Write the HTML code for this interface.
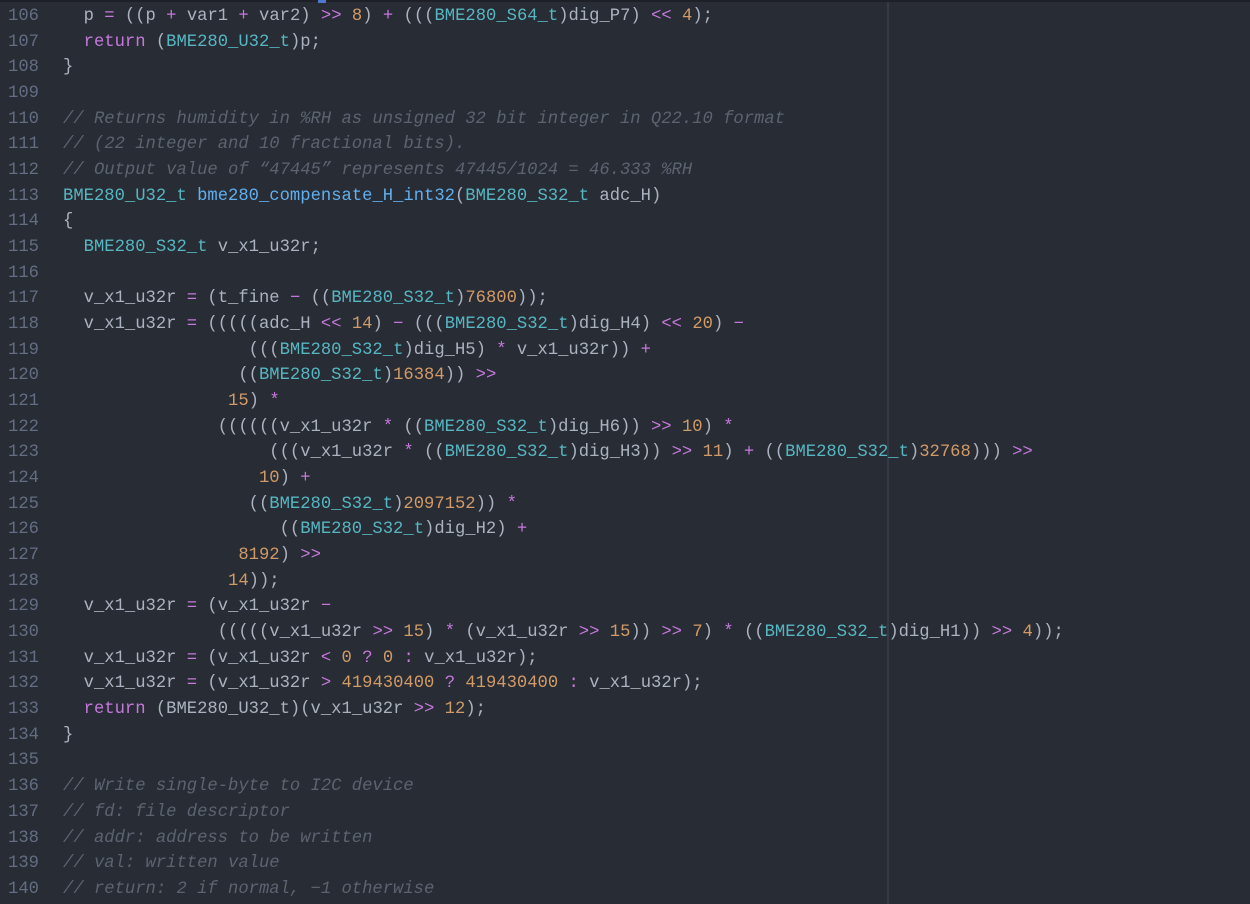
<!DOCTYPE html>
<html><head><meta charset="utf-8"><style>
html,body{margin:0;padding:0;background:#282c34;width:1250px;height:904px;overflow:hidden}
.top{position:absolute;left:0;top:0;width:1250px;height:2px;background:#1d2026}
.top i{position:absolute;left:318px;top:0;width:8px;height:3px;background:#4d78cc}
.guide{position:absolute;left:887px;top:2px;width:2px;height:902px;background:#353a44}
.code{position:absolute;left:0;top:4px;font-family:"Liberation Mono",monospace;font-size:17.2px;line-height:25.68px;color:#abb2bf}
.l{height:25.68px;position:relative;white-space:nowrap}
.n{position:absolute;left:0;width:39px;text-align:right;color:#636d83}
.t{position:absolute;left:63px;white-space:pre}
.k{color:#c678dd}.o{color:#c678dd}.m{color:#d19a66}.y{color:#56b6c2}.f{color:#61afef}.c{color:#5c6370;font-style:italic}
</style></head><body>
<div class="top"><i></i></div>
<div class="guide"></div>
<div class="code"><div class="l"><span class="n">106</span><span class="t">  p <span class="o">=</span> ((p <span class="o">+</span> var1 <span class="o">+</span> var2) <span class="o">&gt;&gt;</span> <span class="m">8</span>) <span class="o">+</span> (((<span class="y">BME280_S64_t</span>)dig_P7) <span class="o">&lt;&lt;</span> <span class="m">4</span>);</span></div>
<div class="l"><span class="n">107</span><span class="t">  <span class="k">return</span> (<span class="y">BME280_U32_t</span>)p;</span></div>
<div class="l"><span class="n">108</span><span class="t">}</span></div>
<div class="l"><span class="n">109</span></div>
<div class="l"><span class="n">110</span><span class="t c">// Returns humidity in %RH as unsigned 32 bit integer in Q22.10 format</span></div>
<div class="l"><span class="n">111</span><span class="t c">// (22 integer and 10 fractional bits).</span></div>
<div class="l"><span class="n">112</span><span class="t c">// Output value of “47445” represents 47445/1024 = 46.333 %RH</span></div>
<div class="l"><span class="n">113</span><span class="t"><span class="y">BME280_U32_t</span> <span class="f">bme280_compensate_H_int32</span>(<span class="y">BME280_S32_t</span> adc_H)</span></div>
<div class="l"><span class="n">114</span><span class="t">{</span></div>
<div class="l"><span class="n">115</span><span class="t">  <span class="y">BME280_S32_t</span> v_x1_u32r;</span></div>
<div class="l"><span class="n">116</span></div>
<div class="l"><span class="n">117</span><span class="t">  v_x1_u32r <span class="o">=</span> (t_fine <span class="o">−</span> ((<span class="y">BME280_S32_t</span>)<span class="m">76800</span>));</span></div>
<div class="l"><span class="n">118</span><span class="t">  v_x1_u32r <span class="o">=</span> (((((adc_H <span class="o">&lt;&lt;</span> <span class="m">14</span>) <span class="o">−</span> (((<span class="y">BME280_S32_t</span>)dig_H4) <span class="o">&lt;&lt;</span> <span class="m">20</span>) <span class="o">−</span></span></div>
<div class="l"><span class="n">119</span><span class="t">                  (((<span class="y">BME280_S32_t</span>)dig_H5) <span class="o">*</span> v_x1_u32r)) <span class="o">+</span></span></div>
<div class="l"><span class="n">120</span><span class="t">                 ((<span class="y">BME280_S32_t</span>)<span class="m">16384</span>)) <span class="o">&gt;&gt;</span></span></div>
<div class="l"><span class="n">121</span><span class="t">                <span class="m">15</span>) <span class="o">*</span></span></div>
<div class="l"><span class="n">122</span><span class="t">               ((((((v_x1_u32r <span class="o">*</span> ((<span class="y">BME280_S32_t</span>)dig_H6)) <span class="o">&gt;&gt;</span> <span class="m">10</span>) <span class="o">*</span></span></div>
<div class="l"><span class="n">123</span><span class="t">                    (((v_x1_u32r <span class="o">*</span> ((<span class="y">BME280_S32_t</span>)dig_H3)) <span class="o">&gt;&gt;</span> <span class="m">11</span>) <span class="o">+</span> ((<span class="y">BME280_S32_t</span>)<span class="m">32768</span>))) <span class="o">&gt;&gt;</span></span></div>
<div class="l"><span class="n">124</span><span class="t">                   <span class="m">10</span>) <span class="o">+</span></span></div>
<div class="l"><span class="n">125</span><span class="t">                  ((<span class="y">BME280_S32_t</span>)<span class="m">2097152</span>)) <span class="o">*</span></span></div>
<div class="l"><span class="n">126</span><span class="t">                     ((<span class="y">BME280_S32_t</span>)dig_H2) <span class="o">+</span></span></div>
<div class="l"><span class="n">127</span><span class="t">                 <span class="m">8192</span>) <span class="o">&gt;&gt;</span></span></div>
<div class="l"><span class="n">128</span><span class="t">                <span class="m">14</span>));</span></div>
<div class="l"><span class="n">129</span><span class="t">  v_x1_u32r <span class="o">=</span> (v_x1_u32r <span class="o">−</span></span></div>
<div class="l"><span class="n">130</span><span class="t">               (((((v_x1_u32r <span class="o">&gt;&gt;</span> <span class="m">15</span>) <span class="o">*</span> (v_x1_u32r <span class="o">&gt;&gt;</span> <span class="m">15</span>)) <span class="o">&gt;&gt;</span> <span class="m">7</span>) <span class="o">*</span> ((<span class="y">BME280_S32_t</span>)dig_H1)) <span class="o">&gt;&gt;</span> <span class="m">4</span>));</span></div>
<div class="l"><span class="n">131</span><span class="t">  v_x1_u32r <span class="o">=</span> (v_x1_u32r <span class="o">&lt;</span> <span class="m">0</span> <span class="o">?</span> <span class="m">0</span> <span class="o">:</span> v_x1_u32r);</span></div>
<div class="l"><span class="n">132</span><span class="t">  v_x1_u32r <span class="o">=</span> (v_x1_u32r <span class="o">&gt;</span> <span class="m">419430400</span> <span class="o">?</span> <span class="m">419430400</span> <span class="o">:</span> v_x1_u32r);</span></div>
<div class="l"><span class="n">133</span><span class="t">  <span class="k">return</span> (BME280_U32_t)(v_x1_u32r <span class="o">&gt;&gt;</span> <span class="m">12</span>);</span></div>
<div class="l"><span class="n">134</span><span class="t">}</span></div>
<div class="l"><span class="n">135</span></div>
<div class="l"><span class="n">136</span><span class="t c">// Write single-byte to I2C device</span></div>
<div class="l"><span class="n">137</span><span class="t c">// fd: file descriptor</span></div>
<div class="l"><span class="n">138</span><span class="t c">// addr: address to be written</span></div>
<div class="l"><span class="n">139</span><span class="t c">// val: written value</span></div>
<div class="l"><span class="n">140</span><span class="t c">// return: 2 if normal, −1 otherwise</span></div></div>
</body></html>
